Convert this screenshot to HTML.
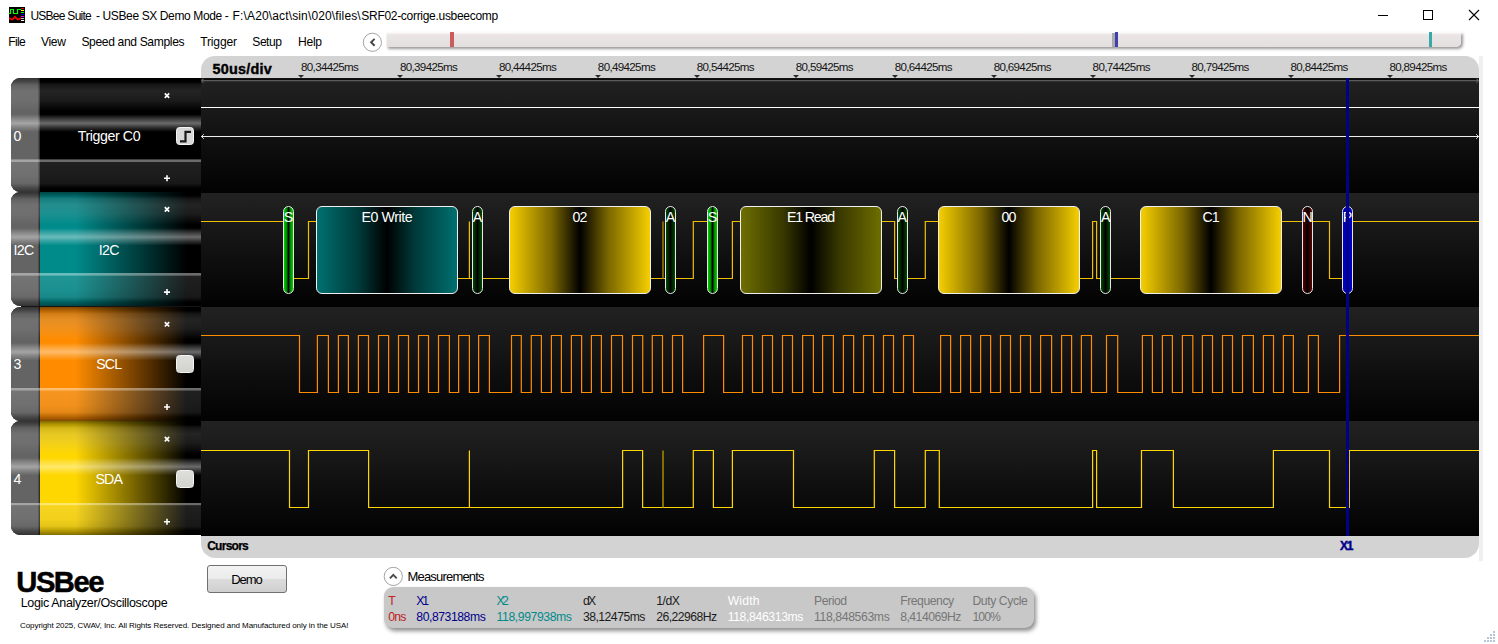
<!DOCTYPE html>
<html><head><meta charset="utf-8"><title>USBee Suite</title>
<style>
*{box-sizing:border-box;margin:0;padding:0}
html,body{width:1498px;height:644px;overflow:hidden;background:#fff;font-family:"Liberation Sans",sans-serif;color:#000}
.a{position:absolute}
.t{position:absolute;white-space:nowrap;line-height:1}
#ruler{position:absolute;left:201px;top:56px;width:1278px;height:23px;background:#d3d3d3;border-radius:14px 14px 0 0}
.tk{position:absolute;top:74.6px;width:0;height:0;border-left:3px solid transparent;border-right:3px solid transparent;border-top:3.5px solid #2a2a2a}
#plot{position:absolute;left:201px;top:78px;width:1278px;height:457.5px;background:#000;overflow:hidden}
.rw{position:absolute;left:0;width:100%;background:linear-gradient(180deg,#222 0,#1a1a1a 25%,#0e0e0e 60%,#020202 100%)}
#svg{position:absolute;left:0;top:0}
.bx{position:absolute;top:206px;height:88px;border:1.3px solid #f0f0f0;border-radius:6px}
.teal{background:linear-gradient(90deg,#007070 0,#003a3a 30%,#000 50%,#003a3a 70%,#007070 100%)}
.gold{background:linear-gradient(90deg,#f5ce00 0,#7a6600 30%,#000 50%,#7a6600 70%,#f5ce00 100%)}
.olive{background:linear-gradient(90deg,#6e6e00 0,#383800 30%,#000 50%,#383800 70%,#6e6e00 100%)}
.bb{position:absolute;top:206px;height:88px;border:1.2px solid #e8e8e8;border-radius:5.5px}
.g1{background:linear-gradient(90deg,#00d000 0,#008c00 28%,#000 50%,#008c00 72%,#00d000 100%)}
.g2{background:linear-gradient(90deg,#004a00 0,#002400 28%,#000 50%,#002400 72%,#004a00 100%)}
.rd{background:linear-gradient(90deg,#5c0000 0,#2c0000 28%,#000 50%,#2c0000 72%,#5c0000 100%)}
.bl{background:linear-gradient(90deg,#0000cd 0,#0000b4 30%,#00008b 50%,#0000b4 70%,#0000cd 100%)}
#cur{position:absolute;left:1346px;top:78px;width:3px;height:457.5px;background:#00008b}
#cbar{position:absolute;left:201px;top:535.5px;width:1278px;height:22.3px;background:#d3d3d3;border-radius:0 0 14.5px 14.5px}
.pn{position:absolute;left:11px;width:190px;border-radius:9px 0 0 9px;overflow:hidden;background:#000}
.pc{position:absolute;left:29px;top:0;right:0;bottom:0}
.pg{position:absolute;left:0;top:0;width:29px;bottom:0;background:linear-gradient(90deg,#646464 0,#646464 92%,#222 100%)}
.gl{position:absolute;left:0;top:0;right:0;bottom:0}
.chk{position:absolute;left:164.8px;width:18.6px;height:18.4px;border-radius:3.5px;background:linear-gradient(180deg,#dededa,#d2d2ce);border:1.3px solid #f4f4f4}
.trg{background:#d8d8d8}
.trg svg{position:absolute;left:-1px;top:-1px}
#demo{position:absolute;left:207px;top:565px;width:80px;height:28px;border:1px solid #707070;border-radius:3px;background:linear-gradient(180deg,#f3f3f3 0,#ebebeb 50%,#dcdcdc 51%,#cfcfcf 100%)}
#meas{position:absolute;left:384px;top:587px;width:650px;height:41px;border-radius:9px;background:#c8c8c8;box-shadow:2px 3px 4px rgba(0,0,0,.45)}
</style></head><body>
<svg class="a" style="left:9px;top:7px" width="16" height="16" viewBox="0 0 16 16"><rect width="16" height="16" fill="#000"/><path d="M0 6.500H1.500V2.500H4.500V6.500H8.500V2.500H12" stroke="#0f0" stroke-width="1.15" fill="none"/><path d="M0 10.9L2.500 12.500H3.500L6 9.800L8.500 12.500H9.500L12 11" stroke="#f00" stroke-width="1.7" fill="none"/><rect x="12" y="1" width="3" height="1" fill="#f00"/><rect x="12" y="3" width="3" height="1" fill="#ff0"/><rect x="12" y="5" width="3" height="1" fill="#0f0"/><rect x="12" y="7" width="3" height="1" fill="#00f"/><rect x="12" y="9" width="3" height="1" fill="#f0f"/><rect x="12" y="11" width="3" height="1" fill="#c0c0c0"/><rect x="12" y="13" width="3" height="1" fill="#fff"/></svg>
<svg class="a" style="left:1370px;top:4px" width="120" height="24" viewBox="0 0 120 24"><path d="M8 11.5H18" stroke="#000" stroke-width="1"/><rect x="53.5" y="6.500" width="9" height="9" fill="none" stroke="#000" stroke-width="1"/><path d="M99 6L109 16M109 6L99 16" stroke="#000" stroke-width="1.1"/></svg>
<svg class="a" style="left:361px;top:31px" width="23" height="23" viewBox="0 0 23 23"><circle cx="11.4" cy="11.3" r="9.1" fill="#fff" stroke="#999" stroke-width="0.9"/><path d="M13.6 7.900L10.1 11.3L13.6 14.700" stroke="#444" stroke-width="1.9" fill="none"/></svg>
<div class="a" style="left:387px;top:31.5px;width:1073.8px;height:15px;background:linear-gradient(180deg,rgba(240,228,228,0) 0,#ebe5e5 18%,#e3dfdf 100%);border-radius:0 0 5px 0;box-shadow:1.5px 2px 3px rgba(0,0,0,.4)"></div>
<div class="a" style="left:450px;top:32px;width:3.5px;height:15px;background:#cd5c5c"></div>
<div class="a" style="left:1112px;top:32.5px;width:3px;height:14px;background:#a9a9a9"></div>
<div class="a" style="left:1115px;top:32px;width:3.3px;height:15px;background:#3f3fb0"></div>
<div class="a" style="left:1429px;top:32px;width:3.3px;height:15px;background:#3aa8a8"></div>
<div id="ruler"></div>
<div class="t" style="left:301.00px;top:61.38px;font-size:11.6px;letter-spacing:-0.662px;color:#141414;">80,34425ms</div><div class="tk" style="left:298.0px"></div><div class="t" style="left:399.95px;top:61.38px;font-size:11.6px;letter-spacing:-0.662px;color:#141414;">80,39425ms</div><div class="tk" style="left:396.9px"></div><div class="t" style="left:498.90px;top:61.38px;font-size:11.6px;letter-spacing:-0.662px;color:#141414;">80,44425ms</div><div class="tk" style="left:495.9px"></div><div class="t" style="left:597.85px;top:61.38px;font-size:11.6px;letter-spacing:-0.662px;color:#141414;">80,49425ms</div><div class="tk" style="left:594.9px"></div><div class="t" style="left:696.80px;top:61.38px;font-size:11.6px;letter-spacing:-0.662px;color:#141414;">80,54425ms</div><div class="tk" style="left:693.8px"></div><div class="t" style="left:795.75px;top:61.38px;font-size:11.6px;letter-spacing:-0.662px;color:#141414;">80,59425ms</div><div class="tk" style="left:792.8px"></div><div class="t" style="left:894.70px;top:61.38px;font-size:11.6px;letter-spacing:-0.662px;color:#141414;">80,64425ms</div><div class="tk" style="left:891.7px"></div><div class="t" style="left:993.65px;top:61.38px;font-size:11.6px;letter-spacing:-0.662px;color:#141414;">80,69425ms</div><div class="tk" style="left:990.6px"></div><div class="t" style="left:1092.60px;top:61.38px;font-size:11.6px;letter-spacing:-0.662px;color:#141414;">80,74425ms</div><div class="tk" style="left:1089.6px"></div><div class="t" style="left:1191.55px;top:61.38px;font-size:11.6px;letter-spacing:-0.662px;color:#141414;">80,79425ms</div><div class="tk" style="left:1188.6px"></div><div class="t" style="left:1290.50px;top:61.38px;font-size:11.6px;letter-spacing:-0.662px;color:#141414;">80,84425ms</div><div class="tk" style="left:1287.5px"></div><div class="t" style="left:1389.45px;top:61.38px;font-size:11.6px;letter-spacing:-0.662px;color:#141414;">80,89425ms</div><div class="tk" style="left:1386.5px"></div>
<div id="plot"><div class="rw" style="top:0.0px;height:114.9px"></div><div class="rw" style="top:114.9px;height:114.2px"></div><div class="rw" style="top:229.1px;height:114.2px"></div><div class="rw" style="top:343.3px;height:114.2px"></div></div>
<div class="a" style="left:201px;top:78px;width:1278px;height:2.2px;background:linear-gradient(180deg,#141414,#080808)"></div>
<svg id="svg" width="1498" height="644" viewBox="0 0 1498 644"><path d="M201 335.5H299.5V392.5H317.4V335.5H328.4V392.5H338.4V335.5H348.4V392.5H358.4V335.5H368.5V392.5H378.5V335.5H388.6V392.5H398.5V335.5H408.5V392.5H418.5V335.5H428.5V392.5H438.5V335.5H449.4V392.5H458.6V335.5H469.4V392.5H478.6V335.5H489.4V392.5H511.5V335.5H521.3V392.5H531.3V335.5H541.4V392.5H551.4V335.5H561.4V392.5H571.4V335.5H581.6V392.5H591.4V335.5H601.4V392.5H611.5V335.5H622.5V392.5H632.5V335.5H642.7V392.5H652.3V335.5H662.5V392.5H672.5V335.5H682.6V392.5H703.6V335.5H723.6V392.5H742.5V335.5H752.5V392.5H762.5V335.5H772.5V392.5H782.5V335.5H792.5V392.5H802.6V335.5H813.4V392.5H822.6V335.5H833.4V392.5H843.4V335.5H853.6V392.5H863.5V335.5H873.5V392.5H883.5V335.5H893.5V392.5H903.5V335.5H913.5V392.5H940.6V335.5H950.6V392.5H960.6V335.5H970.6V392.5H980.6V335.5H990.6V392.5H1000.5V335.5H1010.5V392.5H1020.5V335.5H1030.5V392.5H1040.6V335.5H1051.6V392.5H1061.6V335.5H1071.6V392.5H1081.4V335.5H1091.5V392.5H1106.5V335.5H1117.7V392.5H1142.4V335.5H1152.4V392.5H1162.4V335.5H1172.4V392.5H1182.4V335.5H1192.8V392.5H1202.4V335.5H1212.5V392.5H1222.5V335.5H1232.5V392.5H1242.5V335.5H1253.4V392.5H1263.4V335.5H1273.5V392.5H1283.4V335.5H1293.4V392.5H1308.4V335.5H1318.4V392.5H1339.6V335.5H1479" stroke="#ff8c00" stroke-width="1.2" fill="none"/><path d="M201 450.5H289.5V507.5H308.5V450.5H368.6V507.5H622.6V450.5H642.6V507.5H693.3V450.5H713.4V507.5H732.4V450.5H793.5V507.5H874.3V450.5H894.6V507.5H925.3V450.5H939.3V507.5H1092.6V450.5H1096.6V507.5H1141.5V450.5H1173.4V507.5H1273.4V450.5H1329.5V507.5H1349.3V450.5H1479" stroke="#ffd700" stroke-width="1.2" fill="none"/><path d="M469.4 507.5V450.5" stroke="#ffd700" stroke-width="1.2" fill="none"/><path d="M663 507.5V450.5" stroke="#8e7800" stroke-width="1.8" fill="none"/><path d="M201 221.5H289.5V278.5H308.5V221.5H368.6V278.5H622.6V221.5H642.6V278.5H693.3V221.5H713.4V278.5H732.4V221.5H793.5V278.5H874.3V221.5H894.6V278.5H925.3V221.5H939.3V278.5H1092.6V221.5H1096.6V278.5H1141.5V221.5H1173.4V278.5H1273.4V221.5H1329.5V278.5H1349.3V221.5H1479" stroke="#f0c000" stroke-width="1.2" fill="none"/><path d="M469.4 278.5V221.5" stroke="#f0c000" stroke-width="1.2" fill="none"/><path d="M663 278.5V221.5" stroke="#8a6a00" stroke-width="1.8" fill="none"/><path d="M201.5 80.6H1478.5M203.6 78.6L201.3 80.6L203.6 82.6M1476.4 78.6L1478.7 80.6L1476.4 82.6" stroke="#5c5c5c" stroke-width="1.1" fill="none"/><path d="M201 107.5H1479" stroke="#fff" stroke-width="1.1" fill="none"/><path d="M201 136.5H1479" stroke="#eee" stroke-width="1.15" fill="none"/><path d="M203.8 134.2L201.5 136.5L203.8 138.8" stroke="#ddd" stroke-width="1" fill="none"/><path d="M1476.2 134.2L1478.5 136.5L1476.2 138.8" stroke="#ddd" stroke-width="1" fill="none"/></svg>
<div class="bx teal" style="left:315.9px;width:142.2px"></div><div class="t" style="left:361.50px;top:209.78px;font-size:14.2px;letter-spacing:-0.439px;color:#fff;">E0 Write</div><div class="bx gold" style="left:508.7px;width:142.4px"></div><div class="t" style="left:572.47px;top:209.78px;font-size:14.2px;letter-spacing:-0.894px;color:#fff;">02</div><div class="bx olive" style="left:740.1px;width:142.0px"></div><div class="t" style="left:786.90px;top:209.78px;font-size:14.2px;letter-spacing:-1.156px;color:#fff;">E1 Read</div><div class="bx gold" style="left:937.7px;width:142.4px"></div><div class="t" style="left:1001.47px;top:209.78px;font-size:14.2px;letter-spacing:-0.894px;color:#fff;">00</div><div class="bx gold" style="left:1139.7px;width:142.6px"></div><div class="t" style="left:1202.43px;top:209.78px;font-size:14.2px;letter-spacing:-1.031px;color:#fff;">C1</div><div class="bb g1" style="left:282.7px;width:11.4px"></div><div class="t" style="left:283.68px;top:209.78px;font-size:14.2px;letter-spacing:0.000px;color:#fff;">S</div><div class="bb g2" style="left:471.7px;width:11.6px"></div><div class="t" style="left:472.74px;top:209.78px;font-size:14.2px;letter-spacing:0.000px;color:#fff;">A</div><div class="bb g2" style="left:664.7px;width:11.4px"></div><div class="t" style="left:665.64px;top:209.78px;font-size:14.2px;letter-spacing:0.000px;color:#fff;">A</div><div class="bb g1" style="left:706.7px;width:11.6px"></div><div class="t" style="left:707.78px;top:209.78px;font-size:14.2px;letter-spacing:0.000px;color:#fff;">S</div><div class="bb g2" style="left:896.7px;width:11.1px"></div><div class="t" style="left:897.49px;top:209.78px;font-size:14.2px;letter-spacing:0.000px;color:#fff;">A</div><div class="bb g2" style="left:1100.0px;width:11.3px"></div><div class="t" style="left:1100.89px;top:209.78px;font-size:14.2px;letter-spacing:0.000px;color:#fff;">A</div><div class="bb rd" style="left:1301.9px;width:11.6px"></div><div class="t" style="left:1302.59px;top:209.78px;font-size:14.2px;letter-spacing:0.000px;color:#fff;">N</div><div class="bb bl" style="left:1341.7px;width:11.4px"></div><div class="t" style="left:1342.68px;top:209.78px;font-size:14.2px;letter-spacing:0.000px;color:#fff;">P</div>
<div id="cur"></div>
<div id="cbar"></div>
<div class="a" style="left:1479.4px;top:56px;width:3.5px;height:504.8px;background:#f0f0f0"></div>
<div class="a" style="left:21px;top:80px;width:180px;height:452px;background:#151515"></div>
<div class="pn" style="top:78px;height:114.30px">
<div class="pc" style="background:linear-gradient(90deg,#000 0,#000 22%,#000 91%)"></div>
<div class="pg"></div><div class="gl" style="background:linear-gradient(180deg,rgba(0,0,0,0.5) 0.0px,rgba(0,0,0,0.3) 3.5px,rgba(90,90,90,0.26) 7.0px,rgba(150,150,150,0.24) 13.0px,rgba(170,170,170,0.16) 22.0px,rgba(255,255,255,0) 32.8px,rgba(255,255,255,0) 36.3px,rgba(255,255,255,0.2) 40.3px,rgba(255,255,255,0.42) 45.3px,rgba(255,255,255,0.2) 49.3px,rgba(255,255,255,0) 53.8px,rgba(255,255,255,0) 81.2px,rgba(255,255,255,0.42) 81.7px,rgba(255,255,255,0.42) 83.5px,rgba(200,200,200,0.16) 84.1px,rgba(170,170,170,0.16) 98.3px,rgba(120,120,120,0.2) 105.3px,rgba(0,0,0,0.3) 110.3px,rgba(0,0,0,0.5) 114.3px)"></div><div class="chk trg" style="top:48.9px"><svg width="19" height="19" viewBox="0 0 19 19"><path d="M4 14.3H9.5V4.800H15" stroke="#1a1a1a" stroke-width="2.2" fill="none"/></svg></div>
<svg class="a" style="left:150px;top:0" width="12" height="114.3"><path d="M3.800 15.4L8.200 19.8M8.200 15.4L3.800 19.8" stroke="#fff" stroke-width="1.7" fill="none"/><path d="M3 100.3H9M6 97.3V103.3" stroke="#fff" stroke-width="1.6" fill="none"/></svg>
</div><div class="t" style="left:77.82px;top:128.68px;font-size:14.2px;letter-spacing:-0.419px;color:#fff;">Trigger C0</div><div class="t" style="left:13.40px;top:128.68px;font-size:14.2px;letter-spacing:0.000px;color:#fff;">0</div><div class="pn" style="top:192.3px;height:114.20px">
<div class="pc" style="background:linear-gradient(90deg,#008b8b 0,#008b8b 22%,#000 91%)"></div>
<div class="pg"></div><div class="gl" style="background:linear-gradient(180deg,rgba(0,0,0,0.5) 0.0px,rgba(0,0,0,0.3) 3.5px,rgba(90,90,90,0.26) 7.0px,rgba(150,150,150,0.24) 13.0px,rgba(170,170,170,0.16) 22.0px,rgba(255,255,255,0) 32.6px,rgba(255,255,255,0) 36.1px,rgba(255,255,255,0.2) 40.1px,rgba(255,255,255,0.42) 45.1px,rgba(255,255,255,0.2) 49.1px,rgba(255,255,255,0) 53.6px,rgba(255,255,255,0) 81.0px,rgba(255,255,255,0.42) 81.5px,rgba(255,255,255,0.42) 83.3px,rgba(200,200,200,0.16) 83.9px,rgba(170,170,170,0.16) 98.2px,rgba(120,120,120,0.2) 105.2px,rgba(0,0,0,0.3) 110.2px,rgba(0,0,0,0.5) 114.2px)"></div>
<svg class="a" style="left:150px;top:0" width="12" height="114.2"><path d="M3.800 15.2L8.200 19.6M8.200 15.2L3.800 19.6" stroke="#fff" stroke-width="1.7" fill="none"/><path d="M3 100.1H9M6 97.1V103.1" stroke="#fff" stroke-width="1.6" fill="none"/></svg>
</div><div class="t" style="left:98.79px;top:242.78px;font-size:14.2px;letter-spacing:-0.626px;color:#fff;">I2C</div><div class="t" style="left:13.40px;top:242.78px;font-size:14.2px;letter-spacing:-0.626px;color:#fff;">I2C</div><div class="pn" style="top:306.5px;height:114.30px">
<div class="pc" style="background:linear-gradient(90deg,#ff8c00 0,#ff8c00 22%,#000 91%)"></div>
<div class="pg"></div><div class="gl" style="background:linear-gradient(180deg,rgba(0,0,0,0.5) 0.0px,rgba(0,0,0,0.3) 3.5px,rgba(90,90,90,0.26) 7.0px,rgba(150,150,150,0.24) 13.0px,rgba(170,170,170,0.16) 22.0px,rgba(255,255,255,0) 32.5px,rgba(255,255,255,0) 36.0px,rgba(255,255,255,0.2) 40.0px,rgba(255,255,255,0.42) 45.0px,rgba(255,255,255,0.2) 49.0px,rgba(255,255,255,0) 53.5px,rgba(255,255,255,0) 80.9px,rgba(255,255,255,0.42) 81.4px,rgba(255,255,255,0.42) 83.2px,rgba(200,200,200,0.16) 83.8px,rgba(170,170,170,0.16) 98.3px,rgba(120,120,120,0.2) 105.3px,rgba(0,0,0,0.3) 110.3px,rgba(0,0,0,0.5) 114.3px)"></div><div class="chk" style="top:48.3px"></div>
<svg class="a" style="left:150px;top:0" width="12" height="114.3"><path d="M3.800 15.1L8.200 19.5M8.200 15.1L3.800 19.5" stroke="#fff" stroke-width="1.7" fill="none"/><path d="M3 100.0H9M6 97.0V103.0" stroke="#fff" stroke-width="1.6" fill="none"/></svg>
</div><div class="t" style="left:96.17px;top:356.88px;font-size:14.2px;letter-spacing:-0.783px;color:#fff;">SCL</div><div class="t" style="left:13.40px;top:356.88px;font-size:14.2px;letter-spacing:0.000px;color:#fff;">3</div><div class="pn" style="top:420.8px;height:114.20px">
<div class="pc" style="background:linear-gradient(90deg,#ffd700 0,#ffd700 22%,#000 91%)"></div>
<div class="pg"></div><div class="gl" style="background:linear-gradient(180deg,rgba(0,0,0,0.5) 0.0px,rgba(0,0,0,0.3) 3.5px,rgba(90,90,90,0.26) 7.0px,rgba(150,150,150,0.24) 13.0px,rgba(170,170,170,0.16) 22.0px,rgba(255,255,255,0) 33.3px,rgba(255,255,255,0) 36.8px,rgba(255,255,255,0.2) 40.8px,rgba(255,255,255,0.42) 45.8px,rgba(255,255,255,0.2) 49.8px,rgba(255,255,255,0) 54.3px,rgba(255,255,255,0) 81.7px,rgba(255,255,255,0.42) 82.2px,rgba(255,255,255,0.42) 84.0px,rgba(200,200,200,0.16) 84.6px,rgba(170,170,170,0.16) 98.2px,rgba(120,120,120,0.2) 105.2px,rgba(0,0,0,0.3) 110.2px,rgba(0,0,0,0.5) 114.2px)"></div><div class="chk" style="top:49.1px"></div>
<svg class="a" style="left:150px;top:0" width="12" height="114.2"><path d="M3.800 15.9L8.200 20.3M8.200 15.9L3.800 20.3" stroke="#fff" stroke-width="1.7" fill="none"/><path d="M3 100.8H9M6 97.8V103.8" stroke="#fff" stroke-width="1.6" fill="none"/></svg>
</div><div class="t" style="left:95.40px;top:471.98px;font-size:14.2px;letter-spacing:-0.830px;color:#fff;">SDA</div><div class="t" style="left:13.40px;top:471.98px;font-size:14.2px;letter-spacing:0.000px;color:#fff;">4</div>
<div id="demo"></div>
<svg class="a" style="left:382px;top:565px" width="23" height="23" viewBox="0 0 23 23"><circle cx="11.3" cy="11.4" r="9.1" fill="#fff" stroke="#999" stroke-width="0.9"/><path d="M7.900 13.3L11.3 9.800L14.700 13.3" stroke="#4a4a4a" stroke-width="1.9" fill="none"/></svg>
<div id="meas"></div>
<div class="t" style="left:30.40px;top:9.84px;font-size:12px;letter-spacing:-0.730px;color:#000;">USBee Suite</div><div class="t" style="left:96.00px;top:9.84px;font-size:12px;letter-spacing:-0.381px;color:#000;">- USBee SX Demo Mode -</div><div class="t" style="left:232.60px;top:9.84px;font-size:12px;letter-spacing:0.140px;color:#000;">F:&#92;A20&#92;act&#92;sin&#92;020&#92;files&#92;</div><div class="t" style="left:361.30px;top:9.84px;font-size:12px;letter-spacing:-0.295px;color:#000;">SRF02-corrige.usbeecomp</div><div class="t" style="left:8.30px;top:36.06px;font-size:12.1px;letter-spacing:-0.694px;color:#000;">File</div><div class="t" style="left:41.00px;top:36.06px;font-size:12.1px;letter-spacing:-0.338px;color:#000;">View</div><div class="t" style="left:81.40px;top:36.06px;font-size:12.1px;letter-spacing:-0.360px;color:#000;">Speed and Samples</div><div class="t" style="left:200.30px;top:36.06px;font-size:12.1px;letter-spacing:-0.196px;color:#000;">Trigger</div><div class="t" style="left:252.30px;top:36.06px;font-size:12.1px;letter-spacing:-0.485px;color:#000;">Setup</div><div class="t" style="left:298.00px;top:36.06px;font-size:12.1px;letter-spacing:-0.288px;color:#000;">Help</div><div class="t" style="left:212.50px;top:61.91px;font-size:14.4px;letter-spacing:0.243px;color:#000;font-weight:bold;-webkit-text-stroke:0.4px #000;">50us/div</div><div class="t" style="left:207.20px;top:539.84px;font-size:12px;letter-spacing:-0.737px;color:#000;font-weight:bold;-webkit-text-stroke:0.25px #000;">Cursors</div><div class="t" style="left:1340.00px;top:539.74px;font-size:12px;letter-spacing:-1.200px;color:#00008b;font-weight:bold;-webkit-text-stroke:0.45px #00008b;">X1</div><div class="t" style="left:16.30px;top:567.68px;font-size:29.2px;letter-spacing:-1.492px;color:#000;font-weight:bold;-webkit-text-stroke:0.5px #000;">USBee</div><div class="t" style="left:20.70px;top:596.82px;font-size:12.5px;letter-spacing:-0.336px;color:#000;">Logic Analyzer/Oscilloscope</div><div class="t" style="left:20.00px;top:622.33px;font-size:8px;letter-spacing:-0.073px;color:#000;">Copyright 2025, CWAV, Inc. All Rights Reserved. Designed and Manufactured only in the USA!</div><div class="t" style="left:231.30px;top:573.40px;font-size:13px;letter-spacing:-1.103px;color:#000;">Demo</div><div class="t" style="left:407.50px;top:570.40px;font-size:13px;letter-spacing:-0.809px;color:#000;">Measurements</div><div class="t" style="left:388.20px;top:594.67px;font-size:12.2px;letter-spacing:0.000px;color:#c02020;">T</div><div class="t" style="left:388.20px;top:610.77px;font-size:12.2px;letter-spacing:-0.771px;color:#c02020;">0ns</div><div class="t" style="left:416.30px;top:594.67px;font-size:12.2px;letter-spacing:-2.245px;color:#00008b;">X1</div><div class="t" style="left:416.30px;top:610.77px;font-size:12.2px;letter-spacing:-0.443px;color:#00008b;">80,873188ms</div><div class="t" style="left:496.60px;top:594.67px;font-size:12.2px;letter-spacing:-2.645px;color:#008b8b;">X2</div><div class="t" style="left:496.60px;top:610.77px;font-size:12.2px;letter-spacing:-0.399px;color:#008b8b;">118,997938ms</div><div class="t" style="left:582.90px;top:594.67px;font-size:12.2px;letter-spacing:-1.745px;color:#1c1c1c;">dX</div><div class="t" style="left:582.90px;top:610.77px;font-size:12.2px;letter-spacing:-0.507px;color:#1c1c1c;">38,12475ms</div><div class="t" style="left:656.20px;top:594.67px;font-size:12.2px;letter-spacing:-0.424px;color:#1c1c1c;">1/dX</div><div class="t" style="left:656.20px;top:610.77px;font-size:12.2px;letter-spacing:-0.524px;color:#1c1c1c;">26,22968Hz</div><div class="t" style="left:727.70px;top:594.67px;font-size:12.2px;letter-spacing:0.157px;color:#fff;">Width</div><div class="t" style="left:727.70px;top:610.77px;font-size:12.2px;letter-spacing:-0.363px;color:#fff;">118,846313ms</div><div class="t" style="left:814.00px;top:594.67px;font-size:12.2px;letter-spacing:-0.432px;color:#767676;">Period</div><div class="t" style="left:814.00px;top:610.77px;font-size:12.2px;letter-spacing:-0.363px;color:#767676;">118,848563ms</div><div class="t" style="left:900.20px;top:594.67px;font-size:12.2px;letter-spacing:-0.456px;color:#767676;">Frequency</div><div class="t" style="left:900.20px;top:610.77px;font-size:12.2px;letter-spacing:-0.502px;color:#767676;">8,414069Hz</div><div class="t" style="left:972.40px;top:594.67px;font-size:12.2px;letter-spacing:-0.399px;color:#767676;">Duty Cycle</div><div class="t" style="left:972.40px;top:610.77px;font-size:12.2px;letter-spacing:-0.877px;color:#767676;">100%</div>
<svg class="a" style="left:1484px;top:630px" width="12" height="12" viewBox="0 0 12 12" fill="#b8c4d8"><rect x="9" y="1" width="2" height="2"/><rect x="6" y="4" width="2" height="2"/><rect x="9" y="4" width="2" height="2"/><rect x="3" y="7" width="2" height="2"/><rect x="6" y="7" width="2" height="2"/><rect x="9" y="7" width="2" height="2"/><rect x="0" y="10" width="2" height="2"/><rect x="3" y="10" width="2" height="2"/><rect x="6" y="10" width="2" height="2"/><rect x="9" y="10" width="2" height="2"/></svg>
</body></html>
